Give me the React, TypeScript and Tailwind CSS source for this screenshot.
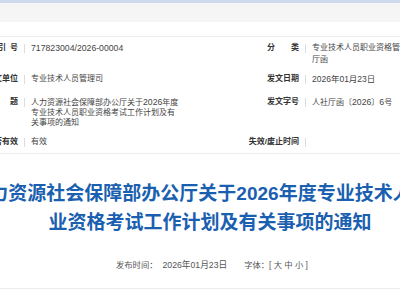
import React from "react";

const font = { fontFamily: '"Liberation Sans", "Noto Sans CJK SC", sans-serif' };

function Cell({ label, children, labelClass = "" }: { label: React.ReactNode; children?: React.ReactNode; labelClass?: string }) {
  return (
    <div className="flex items-start">
      <div className={"flex w-[60px] shrink-0 justify-end font-bold text-[#333] " + labelClass}>{label}</div>
      <div className="mx-[6px] mt-[1px] h-[9px] w-px shrink-0 bg-[#dcdcdc]" />
      <div className="w-[170px] shrink-0 text-[#444]">{children}</div>
    </div>
  );
}

function Spread({ chars }: { chars: string[] }) {
  return (
    <span className="inline-flex w-[32px] justify-between">
      {chars.map((c, i) => (
        <span key={i}>{c}</span>
      ))}
    </span>
  );
}

export default function App() {
  return (
    <div className="relative h-[300px] w-[400px] overflow-hidden bg-white" style={font}>
      <div className="h-[3px] bg-[#cdd9ec]" />
      <div className="h-[19px] bg-[#f5f5f5]" />
      <div className="h-[14px]" />
      <div className="h-px bg-[#ececec]" />
      <div className="ml-[-42px] pt-[6px] text-[8px] leading-[10px]">
        <div className="grid h-[31px] grid-cols-[281px_200px]">
          <Cell label={<Spread chars={["索", "引", "号"]} />}>
            <span className="text-[8.7px]">717823004/2026-00004</span>
          </Cell>
          <Cell label={<Spread chars={["分", "类"]} />}>
            <div className="whitespace-nowrap">专业技术人员职业资格管理；人社部</div>
            <div className="mt-[2px]">厅函</div>
          </Cell>
        </div>
        <div className="grid h-[23px] grid-cols-[281px_200px]">
          <Cell label="发文单位">专业技术人员管理司</Cell>
          <Cell label="发文日期">
            <span className="text-[8.5px]">2026年01月23日</span>
          </Cell>
        </div>
        <div className="grid h-[40px] grid-cols-[281px_200px]">
          <Cell label={<Spread chars={["标", "题"]} />}>
            <div className="w-[149px]">人力资源社会保障部办公厅关于<span className="text-[8.7px] leading-[10px]">2026</span>年度专业技术人员职业资格考试工作计划及有关事项的通知</div>
          </Cell>
          <Cell label="发文字号">人社厅函〔<span className="text-[8.7px] leading-[10px]">2026</span>〕<span className="text-[8.7px] leading-[10px]">6</span>号</Cell>
        </div>
        <div className="grid h-[16px] grid-cols-[281px_200px]">
          <Cell label="是否有效">有效</Cell>
          <Cell label="失效/废止时间"></Cell>
        </div>
      </div>
      <div className="h-px bg-[#ececec]" />
      <div className="h-[25px]" />
      <div className="flex w-[420px] flex-col items-center text-[19px] font-bold leading-[29px] text-[#1a5fb0]">
        <div className="whitespace-nowrap">人力资源社会保障部办公厅关于2026年度专业技术人员职</div>
        <div className="whitespace-nowrap">业资格考试工作计划及有关事项的通知</div>
      </div>
      <div className="h-[23px]" />
      <div className="flex h-[10px] items-center pl-[116px] text-[8.3px] leading-[10px] text-[#555]">
        <span>发布时间：</span>
        <span className="ml-[5px] text-[8.7px]">2026年01月23日</span>
        <span className="ml-[17px]">字体：[ 大 中 小 ]</span>
      </div>
      <div className="h-[18px]" />
      <div className="h-px bg-[#ececec]" />
    </div>
  );
}
